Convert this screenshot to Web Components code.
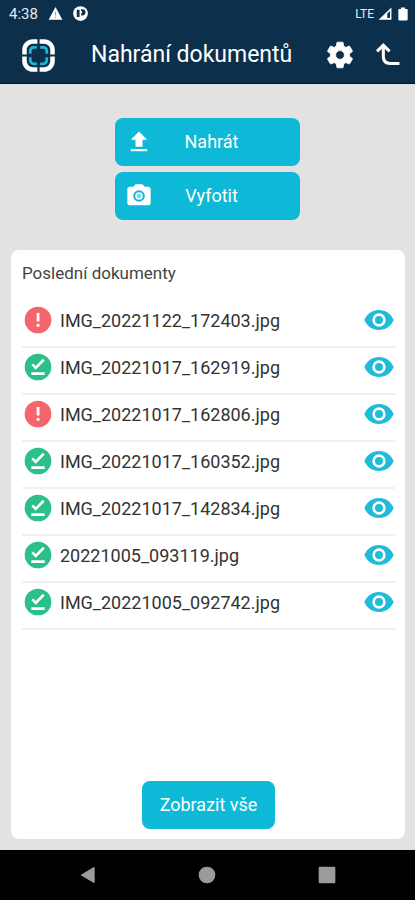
<!DOCTYPE html>
<html lang="cs">
<head>
<meta charset="utf-8">
<meta name="viewport" content="width=device-width, initial-scale=1">
<title>Nahrání dokumentů</title>
<style>
  html, body { margin: 0; min-height: 100%; }
  body { font-family: Roboto, "Noto Sans", sans-serif; background: #e2e2e2; --accent: #0eb9d8; --navy: #0c304c; }
</style>
</head>
<body>
<upload-screen></upload-screen>
<script>
const define = (name, html) => {
  const template = document.createElement('template');
  template.innerHTML = html;
  customElements.define(name, class extends HTMLElement {
    constructor() {
      super();
      this.attachShadow({ mode: 'open' }).append(template.content.cloneNode(true));
    }
  });
};

const ICONS = {
  gear: '<path fill="currentColor" stroke="currentColor" stroke-width=".6" stroke-linejoin="round" d="M19.14 12.94c.04-.3.06-.61.06-.94 0-.32-.02-.64-.07-.94l2.03-1.58a.49.49 0 0 0 .12-.61l-1.92-3.32a.49.49 0 0 0-.59-.22l-2.39.96a7.03 7.03 0 0 0-1.62-.94l-.36-2.54a.48.48 0 0 0-.48-.41h-3.84a.47.47 0 0 0-.47.41l-.36 2.54c-.59.24-1.13.57-1.62.94l-2.39-.96a.48.48 0 0 0-.59.22L2.74 8.87a.47.47 0 0 0 .12.61l2.03 1.58c-.05.3-.09.63-.09.94s.02.64.07.94l-2.03 1.58a.49.49 0 0 0-.12.61l1.92 3.32c.12.22.37.29.59.22l2.39-.96c.5.38 1.03.7 1.62.94l.36 2.54c.05.24.24.41.48.41h3.84c.24 0 .44-.17.47-.41l.36-2.54c.59-.24 1.13-.56 1.62-.94l2.39.96c.22.08.47 0 .59-.22l1.92-3.32a.47.47 0 0 0-.12-.61l-2.01-1.58zM12 15.3a3.3 3.3 0 1 1 0-6.6 3.3 3.3 0 0 1 0 6.6z"/>',
  back: '<path fill="none" stroke="currentColor" stroke-width="2.3" d="M3.800 9.300 8.500 4.600 13.200 9.300M8.500 5V13.200Q8.500 18.400 13.700 18.400H20.600"/>',
  upload: '<path fill="currentColor" d="M9 16h6v-6h4l-7-7-7 7h4v6zm-4 2h14v2H5v-2z"/>',
  camera: '<path fill="currentColor" fill-rule="evenodd" d="M9 2 7.170 4H4c-1.100 0-2 .9-2 2v12c0 1.100.9 2 2 2h16c1.100 0 2-.9 2-2V6c0-1.100-.9-2-2-2h-3.170L15 2H9zm3 15a5 5 0 1 1 0-10 5 5 0 0 1 0 10z"/><circle cx="12" cy="12" r="3.200" fill="currentColor"/><circle cx="12" cy="12" r="2" fill="#0eb9d8" fill-opacity=".55"/>',
  error: '<path fill="#f4666b" d="M12 2a10 10 0 1 0 0 20 10 10 0 0 0 0-20z"/><path fill="#fff" d="M11 6.800h2.100v6.400H11zM11 15h2.100v2.100H11z"/>',
  done: '<circle cx="12" cy="12" r="10" fill="#2bbf8a"/><path fill="#fff" d="M17 18H7v-2h10v2zm-6.700-4L7 10.700l1.400-1.400 1.900 1.900 5.300-5.300L17 7.300 10.300 14z"/>',
  eye: '<path fill="#1fbbd8" d="M12 4.500C7 4.500 2.730 7.610 1 12c1.730 4.390 6 7.500 11 7.500s9.270-3.110 11-7.500c-1.730-4.390-6-7.500-11-7.500zM12 17a5 5 0 1 1 0-10 5 5 0 0 1 0 10zm0-8a3 3 0 1 0 0 6 3 3 0 0 0 0-6z"/>',
  logo: '<g fill="none"><path stroke="#fff" stroke-width="3.300" d="M11.200 1.800H8A6.200 6.200 0 0 0 1.800 8v3.200M12.800 1.800H16A6.200 6.200 0 0 1 22.200 8v3.200M1.800 12.800V16A6.200 6.200 0 0 0 8 22.200h3.200M22.200 12.800V16a6.200 6.200 0 0 1-6.200 6.200h-3.200"/><path stroke="#1fb5d2" stroke-width="2" d="M10.800 6H8.500A2.500 2.500 0 0 0 6 8.500v2.300M13.200 6h2.300A2.500 2.500 0 0 1 18 8.500v2.300M6 13.200v2.300A2.500 2.500 0 0 0 8.500 18h2.300M18 13.200v2.300a2.500 2.500 0 0 1-2.500 2.500h-2.300"/></g>',
  warning: '<path fill="#fff" d="M1 22h22L12 1.500 1 22z"/><path fill="#0c304c" fill-opacity=".45" d="M11 9h2v6h-2zM11 17h2v2h-2z"/>',
  notice: '<circle cx="12" cy="12" r="11.800" fill="#fff"/><path fill="#0c304c" d="M6 6h4.500v11.500H6zM13 5h2a5 5 0 0 1 0 10h-2v-3.500h1.500v-3H13z"/>',
  signal: '<path fill="#fff" d="M1 22 23 1v21z"/><path fill="#0c304c" d="M16 11 20.500 7v12H16z"/>',
  battery: '<path fill="#fff" d="M8.500 1h7v2.500h3.500Q20 3.500 20 5v16Q20 23 18.500 23H5.500Q4 23 4 21V5Q4 3.500 5.500 3.500h3z"/>',
  navback: '<path fill="currentColor" d="M3 12 18.500 2.800Q20 2 20 3.500v17q0 1.500-1.500.700z"/>',
  home: '<circle cx="12" cy="12" r="10" fill="currentColor"/>',
  recent: '<rect x="2" y="2" width="20" height="20" rx="1.500" fill="currentColor"/>'
};

customElements.define('app-icon', class extends HTMLElement {
  constructor() {
    super();
    this.attachShadow({ mode: 'open' });
  }
  connectedCallback() {
    this.shadowRoot.innerHTML = `<style>
      :host { display: block; flex: none; width: var(--size, 32px); height: var(--size, 32px); }
      svg { display: block; width: 100%; height: 100%; }
    </style><svg viewBox="0 0 24 24" aria-hidden="true">${ICONS[this.getAttribute('name')]}</svg>`;
  }
});

define('status-bar', `<style>
  :host { display: flex; align-items: center; gap: 10px; height: 27px; padding: 0 5px 0 9px; box-sizing: border-box; background: var(--navy); color: #e6ebef; font-size: 15px; }
  app-icon { --size: 15px; }
  .right { margin-left: auto; display: flex; align-items: center; gap: 4px; font-size: 12px; }
  .right app-icon { --size: 14px; }
</style>
<span>4:38</span><app-icon name="warning"></app-icon><app-icon name="notice"></app-icon>
<div class="right"><span>LTE</span><app-icon name="signal"></app-icon><app-icon name="battery"></app-icon></div>`);

define('app-header', `<style>
  :host { display: flex; align-items: center; height: 57px; padding: 0 11px 0 22px; box-sizing: border-box; background: var(--navy); border-bottom: 1px solid #07142c; color: #fff; }
  h1 { flex: 1; margin: 0 0 0 36px; font-size: 23px; line-height: 32px; font-weight: 400; white-space: nowrap; }
  button { border: 0; padding: 0; background: none; color: inherit; }
  .actions { display: flex; gap: 16px; }
  .logo { --size: 33px; }
</style>
<app-icon class="logo" name="logo"></app-icon>
<h1><slot></slot></h1>
<div class="actions">
  <button aria-label="Nastavení"><app-icon name="gear"></app-icon></button>
  <button aria-label="Zpět"><app-icon name="back"></app-icon></button>
</div>`);

define('action-button', `<style>
  :host { display: block; }
  button { display: grid; grid-template-columns: 36px 1fr 28px; align-items: center; width: 100%; height: 48px; padding: 0 10px; border: 0; border-radius: 8px; background: var(--accent); color: #fff; font: 400 18px/24px Roboto, "Noto Sans", sans-serif; }
  span { grid-column: 2; text-align: center; }
  ::slotted(app-icon) { --size: 28px; }
  :host([plain]) button { display: block; padding: 0 18px; }
</style>
<button><slot name="icon"></slot><span><slot></slot></span></button>`);

customElements.define('document-row', class extends HTMLElement {
  connectedCallback() {
    this.setAttribute('role', 'listitem');
    this.attachShadow({ mode: 'open' }).innerHTML = `<style>
      :host { display: flex; align-items: center; height: 47px; padding-bottom: 7px; box-sizing: border-box; border-bottom: 2px solid #f0f0f0; }
      span { flex: 1; margin-left: 6px; padding-top: 2px; font-size: 18px; line-height: 24px; color: #333; overflow-wrap: anywhere; }
      button { border: 0; padding: 0; background: none; }
    </style>
    <app-icon name="${this.getAttribute('state')}"></app-icon>
    <span><slot></slot></span>
    <button aria-label="Zobrazit"><app-icon name="eye"></app-icon></button>`;
  }
});

define('document-card', `<style>
  :host { display: flex; flex-direction: column; flex: 1; margin: 30px 10px 11px 11px; padding: 11px 10px 10px 11px; box-sizing: border-box; border-radius: 8px; background: #fff; }
  h2 { margin: 0 0 16px; font-size: 17px; line-height: 24px; font-weight: 400; color: #444; }
  footer { margin-top: auto; padding-top: 16px; display: flex; justify-content: center; }
</style>
<h2><slot name="title"></slot></h2>
<div role="list"><slot></slot></div>
<footer><slot name="footer"></slot></footer>`);

define('system-nav', `<style>
  :host { display: flex; justify-content: space-around; align-items: center; height: 50px; padding: 0 28px; background: #000; }
  button { border: 0; padding: 0; background: none; color: #9b9b9b; --size: 20px; }
</style>
<button aria-label="Zpět"><app-icon name="navback"></app-icon></button>
<button aria-label="Domů"><app-icon name="home"></app-icon></button>
<button aria-label="Poslední aplikace"><app-icon name="recent"></app-icon></button>`);

define('upload-screen', `<style>
  :host { display: flex; flex-direction: column; min-height: 100vh; }
  main { flex: 1; display: flex; flex-direction: column; }
  .actions { display: grid; gap: 6px; width: 185px; margin: 34px auto 0; }
</style>
<status-bar></status-bar>
<app-header>Nahrání dokumentů</app-header>
<main>
  <div class="actions">
    <action-button><app-icon slot="icon" name="upload"></app-icon>Nahrát</action-button>
    <action-button><app-icon slot="icon" name="camera"></app-icon>Vyfotit</action-button>
  </div>
  <document-card>
    <span slot="title">Poslední dokumenty</span>
    <document-row state="error">IMG_20221122_172403.jpg</document-row>
    <document-row state="done">IMG_20221017_162919.jpg</document-row>
    <document-row state="error">IMG_20221017_162806.jpg</document-row>
    <document-row state="done">IMG_20221017_160352.jpg</document-row>
    <document-row state="done">IMG_20221017_142834.jpg</document-row>
    <document-row state="done">20221005_093119.jpg</document-row>
    <document-row state="done">IMG_20221005_092742.jpg</document-row>
    <action-button slot="footer" plain>Zobrazit vše</action-button>
  </document-card>
</main>
<system-nav></system-nav>`);
</script>
</body>
</html>
